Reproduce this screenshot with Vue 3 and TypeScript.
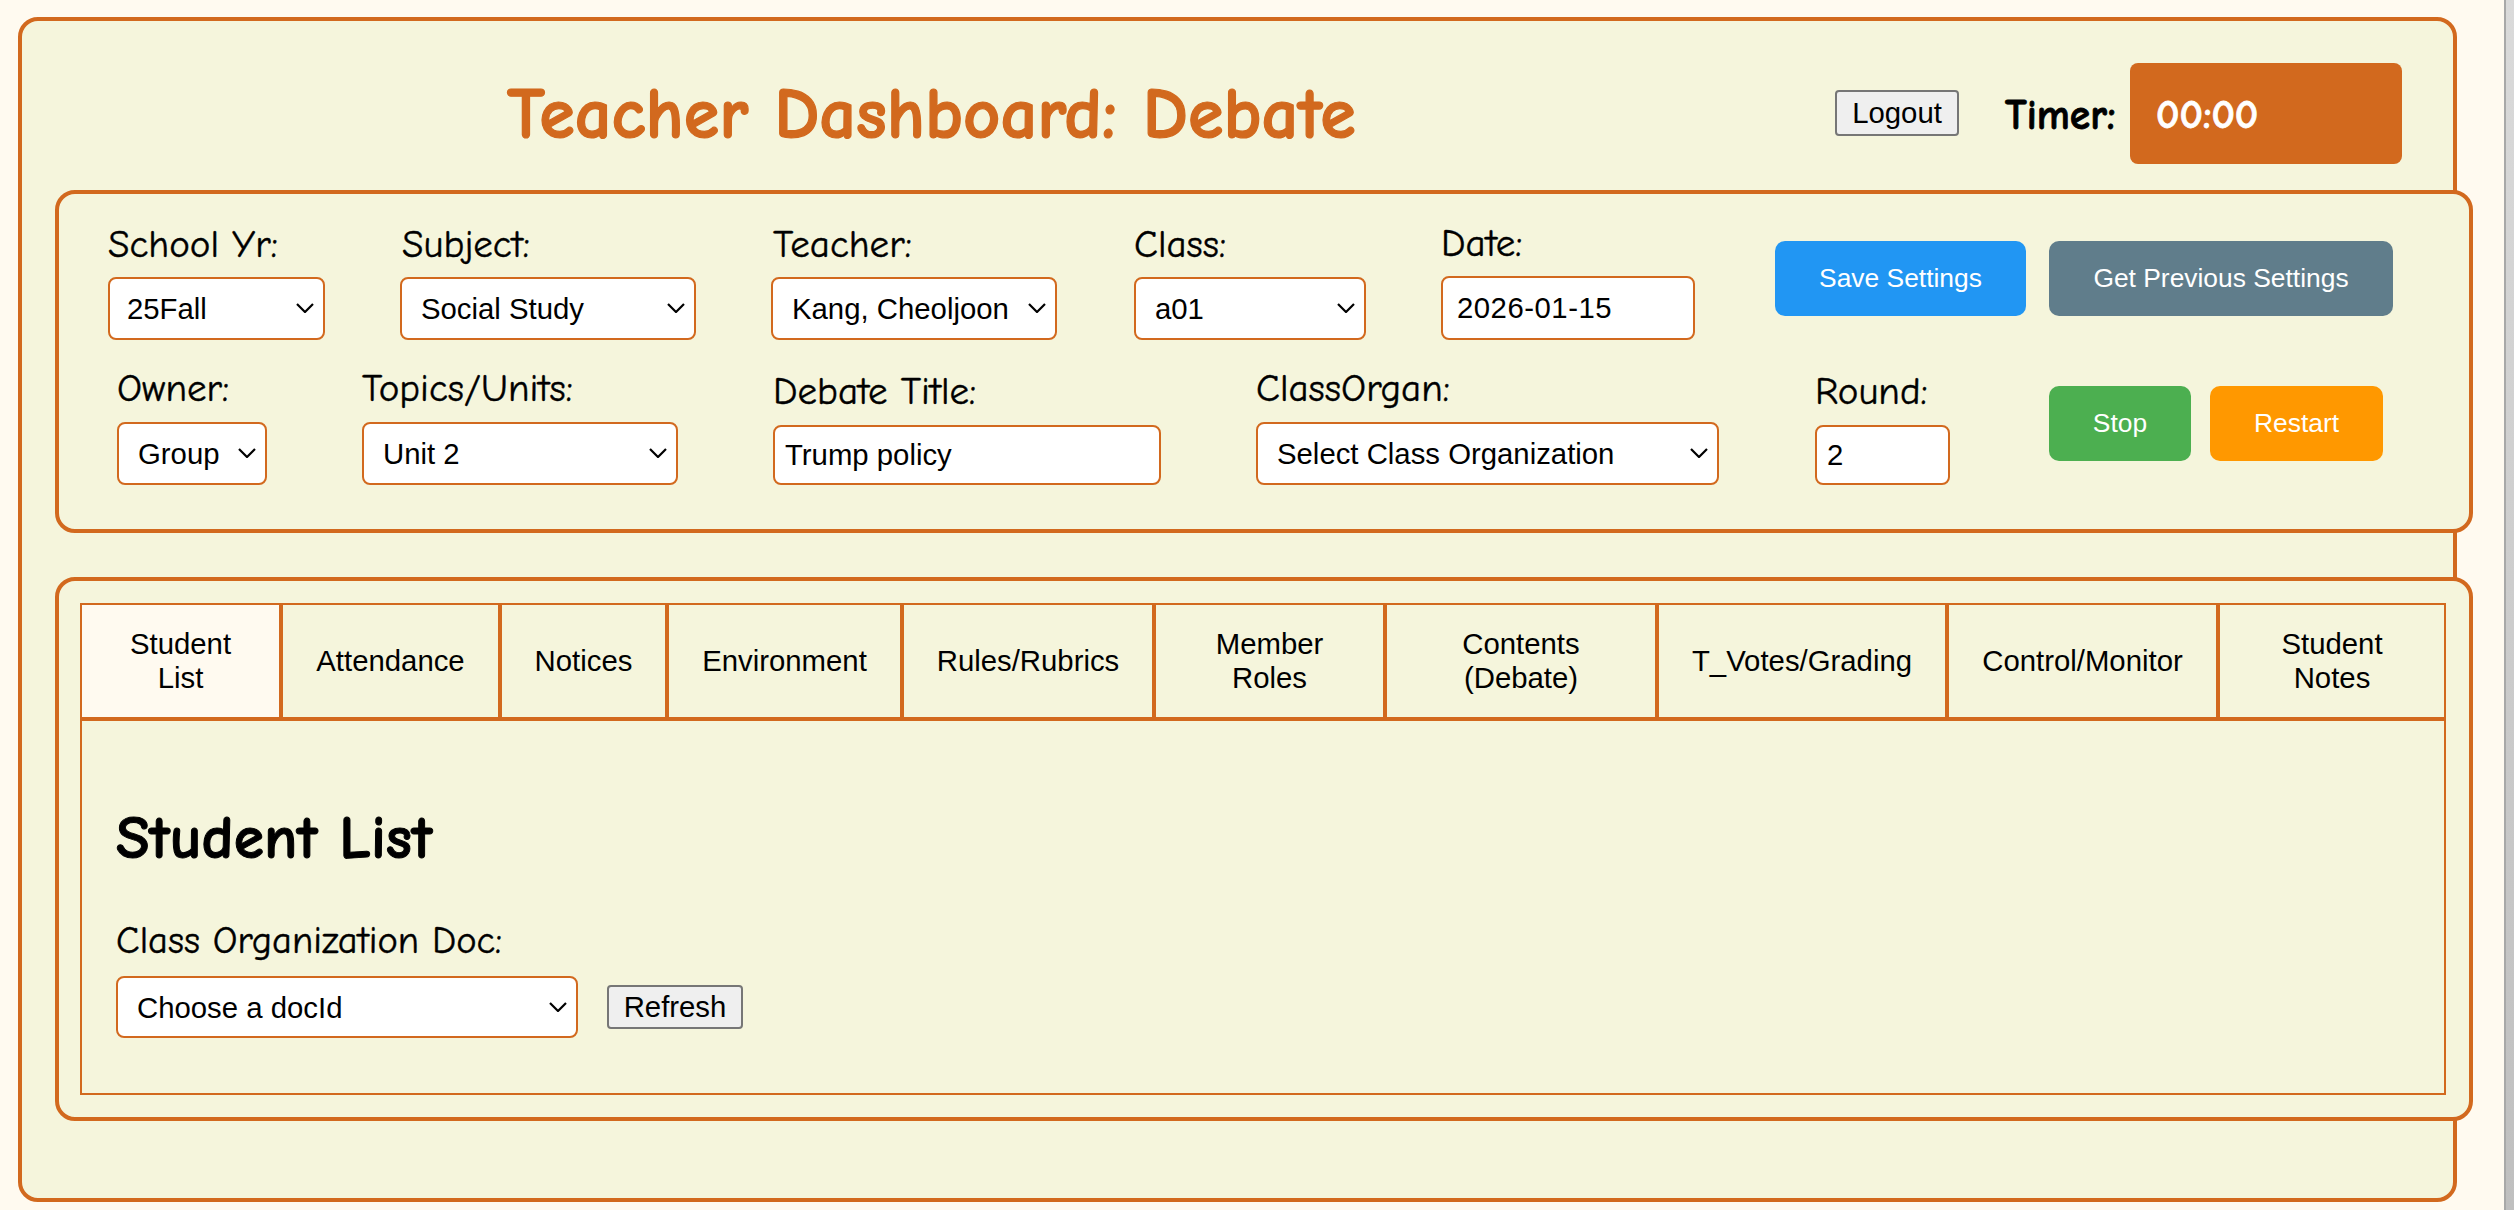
<script setup lang="ts">
const tabs: { label: string; width: number; active?: boolean }[] = [
  { label: 'Student\nList', width: 201, active: true },
  { label: 'Attendance', width: 219 },
  { label: 'Notices', width: 167 },
  { label: 'Environment', width: 235 },
  { label: 'Rules/Rubrics', width: 252 },
  { label: 'Member\nRoles', width: 231 },
  { label: 'Contents\n(Debate)', width: 272 },
  { label: 'T_Votes/Grading', width: 290 },
  { label: 'Control/Monitor', width: 271 },
  { label: 'Student\nNotes', width: 224 },
]
</script>

<template>
  <div class="page">
    <div class="column">
      <main class="dashboard">
        <header class="head">
          <h1 class="title">Teacher Dashboard: Debate</h1>
          <button class="native logout">Logout</button>
          <span class="timer-label">Timer:</span>
          <div class="timer">00:00</div>
        </header>

        <section class="panel settings">
          <div class="row row-one">
            <div class="field f-year">
              <label>School Yr:</label>
              <div class="select-wrap"><select><option>25Fall</option></select><svg class="chev" viewBox="0 0 18 10"><path d="M1 1l8 8 8-8" /></svg></div>
            </div>
            <div class="field f-subject">
              <label>Subject:</label>
              <div class="select-wrap"><select><option>Social Study</option></select><svg class="chev" viewBox="0 0 18 10"><path d="M1 1l8 8 8-8" /></svg></div>
            </div>
            <div class="field f-teacher">
              <label>Teacher:</label>
              <div class="select-wrap"><select><option>Kang, Cheoljoon</option></select><svg class="chev" viewBox="0 0 18 10"><path d="M1 1l8 8 8-8" /></svg></div>
            </div>
            <div class="field f-class">
              <label>Class:</label>
              <div class="select-wrap"><select><option>a01</option></select><svg class="chev" viewBox="0 0 18 10"><path d="M1 1l8 8 8-8" /></svg></div>
            </div>
            <div class="field f-date">
              <label>Date:</label>
              <input class="date" type="text" value="2026-01-15" />
            </div>
            <div class="actions act-one">
              <button class="action blue">Save Settings</button>
              <button class="action slate">Get Previous Settings</button>
            </div>
          </div>
          <div class="row row-two">
            <div class="field f-owner">
              <label>Owner:</label>
              <div class="select-wrap"><select><option>Group</option></select><svg class="chev" viewBox="0 0 18 10"><path d="M1 1l8 8 8-8" /></svg></div>
            </div>
            <div class="field f-topics">
              <label>Topics/Units:</label>
              <div class="select-wrap"><select><option>Unit 2</option></select><svg class="chev" viewBox="0 0 18 10"><path d="M1 1l8 8 8-8" /></svg></div>
            </div>
            <div class="field f-title">
              <label>Debate Title:</label>
              <input class="text" type="text" value="Trump policy" />
            </div>
            <div class="field f-organ">
              <label>ClassOrgan:</label>
              <div class="select-wrap"><select><option>Select Class Organization</option></select><svg class="chev" viewBox="0 0 18 10"><path d="M1 1l8 8 8-8" /></svg></div>
            </div>
            <div class="field f-round">
              <label>Round:</label>
              <input class="text" type="text" value="2" />
            </div>
            <div class="actions act-two">
              <button class="action green">Stop</button>
              <button class="action orange">Restart</button>
            </div>
          </div>
        </section>

        <section class="panel lower">
          <div class="tabbox">
            <nav class="tabs">
              <button
                v-for="tab in tabs"
                :key="tab.label"
                class="tab"
                :class="{ active: tab.active }"
                :style="{ width: tab.width + 'px' }"
              >{{ tab.label }}</button>
            </nav>
            <div class="content">
              <h2 class="section-title">Student List</h2>
              <label class="doc-label">Class Organization Doc:</label>
              <div class="doc-row">
                <div class="select-wrap doc-select"><select><option>Choose a docId</option></select><svg class="chev" viewBox="0 0 18 10"><path d="M1 1l8 8 8-8" /></svg></div>
                <button class="native refresh">Refresh</button>
              </div>
            </div>
          </div>
        </section>
      </main>
    </div>
    <div class="scrollbar"></div>
  </div>
</template>

<style>
html, body { margin: 0; padding: 0; background: #fffaf0; }
</style>

<style scoped>
.page {
  display: flex;
  width: 2514px;
  height: 1210px;
  overflow: hidden;
  background: #fffaf0;
  font-family: "Comic Sans MS", "Comic Neue", cursive;
  color: #000;
}
.column { flex: 1; padding: 17px 0 0 18px; min-width: 0; }
.scrollbar {
  box-sizing: border-box;
  width: 10px;
  background: linear-gradient(#dadada, #bfbfbf);
  border-left: 2px solid #a8a8a8;
}

.dashboard {
  box-sizing: border-box;
  width: 2439px;
  height: 1185px;
  border: 4px solid #d2691e;
  border-radius: 20px;
  background: #f5f5dc;
  padding: 29px 0 0 33px;
}

.head { display: flex; align-items: center; height: 127px; margin-bottom: 13px; }
.title {
  margin: 2px 0 0 452px;
  width: 1328px;
  flex: none;
  font-size: 72.4px;
  font-weight: 700;
  color: #d2691e;
  white-space: nowrap;
  -webkit-text-stroke: 1.2px #d2691e;
}
.native {
  box-sizing: border-box;
  border: 2px solid #767676;
  border-radius: 4px;
  background: #efefef;
  color: #000;
  font-family: "Liberation Sans", Arial, sans-serif;
  font-size: 29.33px;
  padding: 0;
}
.logout { width: 124px; height: 46px; flex: none; margin-top: -2px; }
.timer-label {
  margin: 3px 0 0 46px;
  width: 125px;
  font-size: 41.5px;
  font-weight: 700;
  flex: none;
  white-space: nowrap;
  -webkit-text-stroke: 0.8px #000;
}
.timer {
  box-sizing: border-box;
  flex: none;
  width: 272px;
  height: 101px;
  line-height: 103px;
  padding-left: 26px;
  border-radius: 8px;
  background: #d2691e;
  color: #fff;
  font-size: 41px;
  font-weight: 700;
  -webkit-text-stroke: 0.8px #fff;
}

.panel {
  box-sizing: border-box;
  width: 2418px;
  border: 4px solid #d2691e;
  border-radius: 20px;
  background: #f5f5dc;
}
.settings { height: 343px; padding: 0 0 0 49px; }
.lower { height: 544px; margin-top: 44px; padding: 22px 0 0 21px; }

.row { display: flex; align-items: flex-end; }
.row-one { height: 146px; }
.row-two { height: 145px; }

.field { display: flex; flex-direction: column; flex: none; }
.field label {
  font-size: 39px;
  line-height: 46px;
  margin-bottom: 9px;
  white-space: nowrap;
  -webkit-text-stroke: 0.4px #000;
}
.row-two .field label { margin-bottom: 10px; }
.f-subject label, .f-teacher label { padding-left: 2px; }

.select-wrap { position: relative; }
select {
  appearance: none;
  box-sizing: border-box;
  display: block;
  width: 100%;
  height: 63px;
  border: 2px solid #d2691e;
  border-radius: 8px;
  background: #fff;
  color: #000;
  font-family: "Liberation Sans", Arial, sans-serif;
  font-size: 29.33px;
  padding: 0 0 0 19px;
}
.f-year select { padding-left: 17px; }
.chev {
  position: absolute;
  right: 11px;
  top: 26px;
  width: 18px;
  height: 10px;
  pointer-events: none;
}
.chev path { fill: none; stroke: #000; stroke-width: 2.2; }

input {
  box-sizing: border-box;
  display: block;
  width: 100%;
  height: 60px;
  border: 2px solid #d2691e;
  border-radius: 8px;
  background: #fff;
  color: #000;
  font-family: "Liberation Sans", Arial, sans-serif;
  font-size: 29.33px;
  padding: 0 0 0 10px;
}
input.date {
  height: 64px;
  padding-left: 14px;
  letter-spacing: 0.5px;
}

.f-year { width: 217px; }
.f-subject { width: 296px; margin-left: 75px; }
.f-teacher { width: 286px; margin-left: 75px; }
.f-class { width: 232px; margin-left: 77px; }
.f-date { width: 254px; margin-left: 75px; }
.act-one { margin-left: 80px; }
.f-owner { width: 150px; margin-left: 9px; }
.f-topics { width: 316px; margin-left: 95px; }
.f-title { width: 388px; margin-left: 95px; }
.f-organ { width: 463px; margin-left: 95px; }
.f-round { width: 135px; margin-left: 96px; }
.act-two { margin-left: 99px; }

.actions { display: flex; flex: none; align-self: flex-start; }
.act-one { margin-top: 47px; gap: 23px; }
.act-two { margin-top: 46px; gap: 19px; }
.action {
  box-sizing: border-box;
  height: 75px;
  border: 0;
  border-radius: 10px;
  color: #fff;
  font-family: "Liberation Sans", Arial, sans-serif;
  font-size: 26.4px;
  padding: 0;
}
.blue { width: 251px; background: #2196f3; }
.slate { width: 344px; background: #607d8b; }
.green { width: 142px; background: #4caf50; }
.orange { width: 173px; background: #ff9800; }

.tabbox {
  box-sizing: border-box;
  width: 2366px;
  height: 492px;
  border: 2px solid #d2691e;
  display: flex;
  flex-direction: column;
}
.tabs { display: flex; height: 112px; flex: none; border-bottom: 4px solid #d2691e; }
.tab {
  box-sizing: border-box;
  flex: none;
  height: 100%;
  border: 0;
  border-right: 4px solid #d2691e;
  background: transparent;
  color: #000;
  font-family: "Liberation Sans", Arial, sans-serif;
  font-size: 29.33px;
  line-height: 34px;
  padding: 0;
  white-space: pre-line;
}
.tab:last-child { border-right: 0; }
.tab.active { background: #fffaf0; }

.content { padding: 0 0 0 34px; }
.section-title {
  margin: 81px 0 0;
  font-size: 61.5px;
  font-weight: 700;
  line-height: 72px;
  -webkit-text-stroke: 1px #000;
}
.doc-label {
  display: block;
  margin-top: 44px;
  font-size: 38.5px;
  line-height: 46px;
  white-space: nowrap;
  -webkit-text-stroke: 0.4px #000;
}
.doc-row { display: flex; align-items: center; margin-top: 12px; }
.doc-select { width: 462px; }
.doc-select select { height: 62px; }
.refresh { width: 136px; height: 44px; margin-left: 29px; }
</style>
